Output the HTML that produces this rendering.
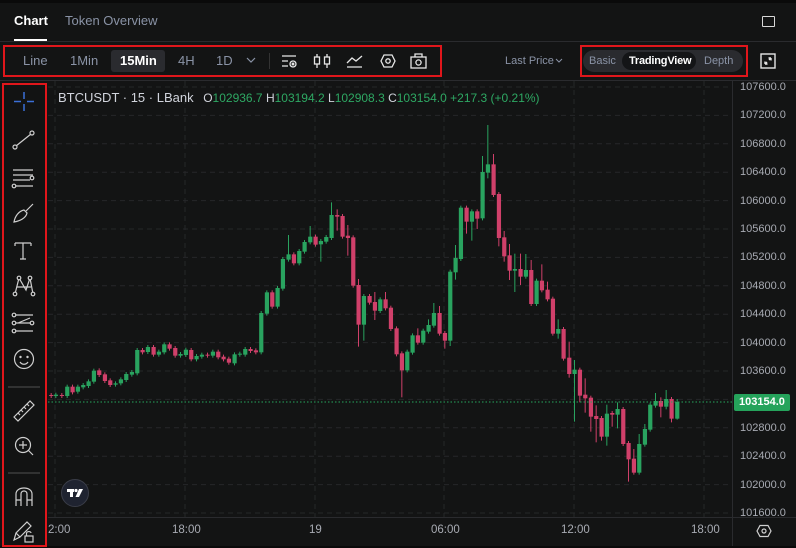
<!DOCTYPE html>
<html><head><meta charset="utf-8"><style>
*{margin:0;padding:0;box-sizing:border-box}
body{width:796px;height:548px;background:#0c0c0c;font-family:"Liberation Sans",sans-serif;overflow:hidden;position:relative;color:#d1d4dc}
.abs{position:absolute}
.tab{position:absolute;top:13px;font-size:13px}
.tf{position:absolute;top:53px;font-size:13px;color:#8a93a6}
.red{position:absolute;border:2.5px solid #e0161b}
.pl{position:absolute;left:740px;font-size:11px;color:#a8abb3}
.tl{position:absolute;top:524px;font-size:11.5px;color:#a8abb3}
</style></head><body>
<div class="abs" style="left:0;top:0;width:796px;height:548px;background:#131414"></div>
<div class="abs" style="left:0;top:0;width:796px;height:3px;background:#0a0a0a"></div>
<div class="tab" style="left:14px;color:#fff;font-weight:bold">Chart</div>
<div class="abs" style="left:14px;top:39px;width:33px;height:2px;background:#fff"></div>
<div class="tab" style="left:65px;color:#8a93a6">Token Overview</div>
<div class="abs" style="left:0;top:41px;width:796px;height:1px;background:#2a2b2e"></div>
<div class="abs" style="left:762px;top:16px;width:13px;height:11px;border:1.5px solid #d8d8d8;border-radius:1px"></div>

<div class="abs" style="left:111px;top:50px;width:54px;height:22px;background:#2a2b2f;border-radius:3px"></div>
<div class="tf" style="left:23px">Line</div>
<div class="tf" style="left:70px">1Min</div>
<div class="tf" style="left:120px;color:#fff;font-weight:bold">15Min</div>
<div class="tf" style="left:178px">4H</div>
<div class="tf" style="left:216px">1D</div>
<svg class="abs" style="left:246px;top:57px" width="10" height="6"><path d="M1 1L5 5L9 1" stroke="#8a93a6" fill="none" stroke-width="1.2"/></svg>
<div class="abs" style="left:269px;top:53px;width:1px;height:16px;background:#333"></div>
<svg class="abs" style="left:280px;top:52px" width="160" height="18" fill="none" stroke="#e6e6e6" stroke-width="1.3">
<path d="M2 4H16M2 9H8M2 14H8"/><circle cx="13" cy="12" r="3"/><circle cx="13" cy="12" r=".8" fill="#e6e6e6"/>
<path d="M37 2V16M47 2V16"/><rect x="34.5" y="5" width="5" height="7" fill="#131414"/><rect x="44.5" y="5" width="5" height="7" fill="#131414"/>
<path d="M67 15H82M67 11L72 6L76 9L82 4"/>
<path d="M101 9L104 3H112L115 9L112 15H104Z"/><circle cx="108" cy="9" r="2.2"/>
<rect x="131" y="5" width="15" height="11"/><path d="M135 5V2H142V5"/><circle cx="138.5" cy="10.5" r="2.6"/>
</svg>
<div class="red" style="left:3px;top:45px;width:439px;height:32px"></div>

<div class="abs" style="left:505px;top:55px;font-size:11px;color:#8a93a6">Last Price</div>
<svg class="abs" style="left:555px;top:58px" width="8" height="5"><path d="M1 1L4 4L7 1" stroke="#8a93a6" fill="none"/></svg>
<div class="abs" style="left:583px;top:50px;width:160px;height:22px;background:#2a2b2f;border-radius:11px"></div>
<div class="abs" style="left:622px;top:52px;width:74px;height:18px;background:#141517;border-radius:9px"></div>
<div class="abs" style="left:589px;top:55px;font-size:11px;color:#8a93a6">Basic</div>
<div class="abs" style="left:629px;top:55px;font-size:11px;color:#fff;font-weight:bold;letter-spacing:-.2px">TradingView</div>
<div class="abs" style="left:704px;top:55px;font-size:11px;color:#8a93a6">Depth</div>
<div class="red" style="left:580px;top:45px;width:168px;height:32px"></div>
<svg class="abs" style="left:760px;top:53px" width="16" height="16" fill="none" stroke="#e6e6e6" stroke-width="1.4"><rect x="1" y="1" width="14" height="14"/><path d="M5 11L7 9M5 11V8.5M5 11H7.5M11 5L9 7M11 5V7.5M11 5H8.5"/></svg>

<div class="abs" style="left:0;top:80px;width:796px;height:1px;background:#2a2b2e"></div>
<div class="abs" style="left:732px;top:81px;width:1px;height:467px;background:#2a2b2e"></div>
<div class="abs" style="left:48px;top:517px;width:748px;height:1px;background:#2a2b2e"></div>
<div class="abs" style="left:0;top:546px;width:796px;height:2px;background:#0a0a0a"></div>

<svg class="abs" style="left:0;top:0" width="796" height="548" id="ch">
<g stroke="#262729" stroke-dasharray="5 4" stroke-width="1" id="grid"></g>
<g id="cand"></g>
<line x1="48" y1="402" x2="732" y2="402" stroke="#26a65b" stroke-dasharray="1.5 2"/>
</svg>
<div id="pls"></div>
<div class="abs" style="left:734px;top:394px;width:56px;height:17px;background:#25a35b;border-radius:2px;color:#fff;font-size:11px;font-weight:bold;padding:2px 0 0 5px">103154.0</div>

<div class="abs" style="left:58px;top:90px;font-size:13px;color:#d1d4dc;white-space:nowrap">BTCUSDT · 15 · LBank <span style="font-size:12px;margin-left:6px">O<span style="color:#2ea863">102936.7</span> H<span style="color:#2ea863">103194.2</span> L<span style="color:#2ea863">102908.3</span> C<span style="color:#2ea863">103154.0</span> <span style="color:#2ea863">+217.3 (+0.21%)</span></span></div>

<div class="abs" style="left:61px;top:479px;width:28px;height:28px;border-radius:50%;background:#1f2330;border:1px solid #3a3d48"></div>
<svg class="abs" style="left:66px;top:486px" width="18" height="14" fill="#fff"><rect x="1" y="3" width="7" height="3"/><rect x="4" y="3" width="3" height="8"/><circle cx="10" cy="4.5" r="1.6"/><path d="M13 3H17L13 11H9.5Z"/></svg>

<div class="tl" style="left:48px">2:00</div>
<div class="tl" style="left:172px">18:00</div>
<div class="tl" style="left:309px">19</div>
<div class="tl" style="left:431px">06:00</div>
<div class="tl" style="left:561px">12:00</div>
<div class="tl" style="left:691px">18:00</div>
<svg class="abs" style="left:756px;top:524px" width="16" height="14" fill="none" stroke="#d0d0d0" stroke-width="1.2"><path d="M1 7L4 1.5H12L15 7L12 12.5H4Z"/><circle cx="8" cy="7" r="2"/></svg>

<div class="abs" style="left:2px;top:82px;width:44px;height:465px;background:#121313"></div>
<svg class="abs" style="left:0;top:82px" width="48" height="466" fill="none" stroke="#cfcfcf" stroke-width="1.2">
<path d="M24 10V17M24 22V29M14 19.5H21M27 19.5H34" stroke="#3b6fd8" stroke-width="1.5"/>
<path d="M16 64L31 52"/><circle cx="15" cy="65" r="2" fill="#121313"/><circle cx="32" cy="51" r="2" fill="#121313"/>
<path d="M13 88H33M13 93H33M13 98H30M13 104H33"/><circle cx="32" cy="96" r="1.8" fill="#121313"/><circle cx="14" cy="104" r="1.8" fill="#121313"/>
<path d="M14 140C15 134 19 129 24 128L27 131C26 136 20 139 14 140ZM26 129L33 122"/>
<path d="M15 161H31M23 161V177M20 177H26M15 161V164M31 161V164"/>
<path d="M15 212L19 196L26 208L30 196L33 212M17 205L31 205"/><circle cx="15" cy="212" r="1.8" fill="#121313"/><circle cx="19" cy="196" r="1.8" fill="#121313"/><circle cx="30" cy="196" r="1.8" fill="#121313"/><circle cx="33" cy="212" r="1.8" fill="#121313"/>
<path d="M13 233H33M13 241H33M13 249H33M18 241L30 236" /><circle cx="14" cy="233" r="1.8" fill="#121313"/><circle cx="14" cy="241" r="1.8" fill="#121313"/><circle cx="32" cy="241" r="1.8" fill="#121313"/><circle cx="14" cy="249" r="1.8" fill="#121313"/>
<circle cx="24" cy="277" r="9.5"/><circle cx="20.5" cy="275" r=".6" fill="#cfcfcf"/><circle cx="27.5" cy="275" r=".6" fill="#cfcfcf"/><path d="M20 280C22 283 26 283 28 280"/>
<path d="M8 305H40" stroke="#444"/>
<path d="M14 335L30 319L34 323L18 339ZM18 331L20 333M21 328L23 330M24 325L26 327M27 322L29 324"/>
<circle cx="23" cy="363" r="7.5"/><path d="M23 359V367M19 363H27M28.5 368.5L33 373"/>
<path d="M8 391H40" stroke="#444"/>
<path d="M16 424V412C16 404 32 404 32 412V424M16 418H21M27 418H32M21 424V412C21 408 27 408 27 412V424"/>
<path d="M14 458L16 451L27 440L31 444L20 455ZM16 451L20 455"/><rect x="25" y="454" width="8" height="6"/><path d="M26.5 454V451.5C26.5 449 31 449 31 451"/>
</svg>
<div class="red" style="left:2px;top:83px;width:45px;height:464px"></div>

<script>
var g=document.getElementById('grid'),s='';
for(var i=0;i<16;i++){var y=87+i*28.4;s+='<line x1="48" y1="'+y+'" x2="732" y2="'+y+'"/>';}
[55,185,315,444,574,704].forEach(function(x){s+='<line x1="'+x+'" y1="81" x2="'+x+'" y2="517"/>';});
g.innerHTML=s;
var p='';for(var i=0;i<16;i++){var v=(107600-400*i).toFixed(1);p+='<div class="pl" style="top:'+(81+i*28.4)+'px">'+v+'</div>';}
document.getElementById('pls').innerHTML=p;
var A=[[8,855,858,'r'],[22,854,858,'g'],[40,855,858,'r'],[56,830,858,'g'],[72,830,847,'r'],[88,830,845,'g'],[104,825,832,'g'],[120,814,828,'g'],[136,782,815,'g'],[152,781,795,'r'],[169,793,813,'r'],[185,811,825,'r'],[201,820,824,'g'],[217,808,820,'g'],[233,792,810,'g'],[250,786,794,'g'],[266,720,790,'g'],[282,720,727,'r'],[298,711,726,'g'],[315,711,734,'r'],[331,725,734,'g'],[347,703,727,'g'],[363,703,716,'r'],[380,714,737,'r'],[396,732,737,'g'],[412,719,735,'g'],[428,720,748,'r'],[444,738,748,'g'],[460,734,740,'g'],[477,734,737,'r'],[493,725,737,'g'],[509,725,742,'r'],[525,740,748,'r'],[541,746,758,'r'],[558,733,760,'g'],[574,731,734,'g'],[590,717,734,'g'],[606,717,723,'r'],[622,721,727,'r'],[638,609,727,'g'],[655,547,611,'g'],[671,547,590,'r'],[687,534,590,'g'],[703,447,536,'g'],[720,433,449,'g',375],[736,433,460,'r'],[752,423,460,'g'],[768,396,425,'g'],[785,380,397,'g',348],[801,380,404,'r'],[817,393,403,'g',0,455],[833,381,395,'g'],[849,315,384,'g',277],[866,315,320,'r',298,362],[882,318,380,'r'],[898,377,384,'r',345,437],[914,382,527,'r'],[930,525,644,'r',507,710],[946,558,644,'g',0,692],[963,558,578,'r'],[979,576,602,'r',546,630]];
var B=[[5,568,603,'g'],[21,568,595,'r',546],[37,593,657,'r'],[54,655,733,'r'],[70,730,781,'r',0,862],[86,725,781,'g'],[102,676,728,'g'],[118,676,698,'r',655],[134,662,698,'g'],[150,645,665,'g',628],[166,609,647,'g',579],[183,609,671,'r',588],[199,669,692,'r',0,716],[215,485,692,'g',0,708],[231,444,487,'g',405,509],[247,293,447,'g'],[264,293,335,'r',0,371],[280,304,335,'g',0,392],[296,304,326,'r',0,357],[312,186,325,'g',138],[328,163,188,'g',45,205],[345,163,255,'r',132],[361,252,384,'r',0,409],[377,382,439,'r',363,455],[393,436,482,'r',402,510],[409,477,482,'g',431,546],[426,477,500,'r',431,525],[442,480,500,'g',432],[458,480,582,'r',450],[474,512,582,'g'],[490,512,541,'r',463],[507,539,568,'r',515],[523,566,671,'r'],[539,657,671,'g',628,686],[555,657,746,'r'],[572,743,792,'r',695,803],[588,779,792,'g',750,935],[604,779,857,'r',0,877],[620,854,865,'r',805,908],[637,863,920,'r',0,965],[653,918,927,'r',886,997],[669,924,980,'r',0,992],[685,911,980,'g',884,1007],[701,909,914,'r',0,950],[717,897,914,'g',877,955],[734,897,1002,'r'],[750,999,1048,'r',0,1115],[766,1046,1088,'r',1017],[782,1002,1088,'g',972],[799,957,1004,'g',942,1010],[815,884,959,'g'],[831,873,887,'g',849],[847,873,890,'r',862,922],[863,867,890,'g',840,898],[879,867,926,'r',0,937],[896,876,926,'g',867,929]];
var c='',G='#29a35f',R='#d0406a';
function add(x,t,b,col,hi,lo){var f=col=='g'?G:R;t=t/3+110;b=b/3+110;var h=hi?hi/3+110:t-2,l=lo?lo/3+110:b+2;
c+='<line x1="'+x+'" y1="'+h+'" x2="'+x+'" y2="'+l+'" stroke="'+f+'" stroke-width="1"/>';
c+='<rect x="'+(x-2)+'" y="'+t+'" width="4.2" height="'+Math.max(1,b-t)+'" fill="'+f+'"/>';}
A.forEach(function(a){add(48+a[0]/3+0.5,a[1],a[2],a[3],a[4],a[5]);});
B.forEach(function(a){add(378+a[0]/3+0.5,a[1],a[2],a[3],a[4],a[5]);});
document.getElementById('cand').innerHTML=c;
</script>
</body></html>
